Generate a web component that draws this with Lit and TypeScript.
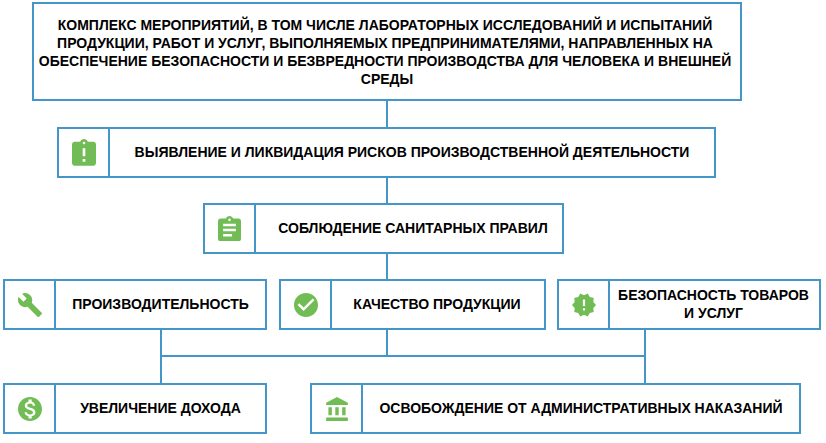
import { LitElement, html, css, svg } from "lit";
import { customElement } from "lit/decorators.js";

const P = {
  late: "M19 3h-4.18C14.4 1.84 13.3 1 12 1c-1.3 0-2.4.84-2.82 2H5c-1.1 0-2 .9-2 2v14c0 1.1.9 2 2 2h14c1.1 0 2-.9 2-2V5c0-1.1-.9-2-2-2zm-6 15h-2v-2h2v2zm0-4h-2V8h2v6zm-1-9c-.55 0-1-.45-1-1s.45-1 1-1 1 .45 1 1-.45 1-1 1z",
  assign: "M19 3h-4.18C14.4 1.84 13.3 1 12 1c-1.3 0-2.4.84-2.82 2H5c-1.1 0-2 .9-2 2v14c0 1.1.9 2 2 2h14c1.1 0 2-.9 2-2V5c0-1.1-.9-2-2-2zm-7 0c.55 0 1 .45 1 1s-.45 1-1 1-1-.45-1-1 .45-1 1-1zm2 14H7v-2h7v2zm3-4H7v-2h10v2zm0-4H7V7h10v2z",
  build: "M22.7 19l-9.1-9.1c.9-2.3.4-5-1.5-6.9-2-2-5-2.4-7.4-1.3L9 6 6 9 1.6 4.7C.4 7.1.9 10.1 2.9 12.1c1.9 1.9 4.6 2.4 6.9 1.5l9.1 9.1c.4.4 1 .4 1.4 0l2.3-2.3c.5-.4.5-1.1.1-1.4z",
  check: "M12 2C6.48 2 2 6.48 2 12s4.48 10 10 10 10-4.48 10-10S17.52 2 12 2zm-2 15l-5-5 1.41-1.41L10 14.17l7.59-7.59L19 8l-9 9z",
  fresh: "M23 12l-2.44-2.78.34-3.68-3.61-.82-1.89-3.18L12 3 8.6 1.54 6.71 4.72l-3.61.81.34 3.68L1 12l2.44 2.78-.34 3.69 3.61.82 1.89 3.18L12 21l3.4 1.46 1.89-3.18 3.61-.82-.34-3.68L23 12zm-10 5h-2v-2h2v2zm0-4h-2V7h2v6z",
  money: "M12 2C6.48 2 2 6.48 2 12s4.48 10 10 10 10-4.48 10-10S17.52 2 12 2zm1.41 16.09V20h-2.67v-1.93c-1.71-.36-3.16-1.46-3.27-3.4h1.96c.1 1.05.82 1.87 2.65 1.87 1.96 0 2.4-.98 2.4-1.59 0-.83-.44-1.61-2.67-2.14-2.48-.6-4.18-1.62-4.18-3.67 0-1.72 1.39-2.84 3.11-3.21V4h2.67v1.95c1.86.45 2.79 1.86 2.85 3.39H14.3c-.05-1.11-.64-1.87-2.22-1.87-1.5 0-2.4.68-2.4 1.64 0 .84.65 1.39 2.67 1.91s4.18 1.39 4.18 3.91c-.01 1.83-1.38 2.83-3.12 3.16z",
  bank: "M4 10v7h3v-7H4zm6 0v7h3v-7h-3zM2 22h19v-3H2v3zm14-12v7h3v-7h-3zm-4.5-9L2 6v2h19V6l-9.5-5z",
};

@customElement("app-root")
export class AppRoot extends LitElement {
  static styles = css`
    :host {
      display: block;
      width: 826px;
      height: 443px;
      background: #fff;
      font-family: "Liberation Sans", Arial, sans-serif;
      font-weight: 700;
      font-size: 14px;
      color: #000;
      padding-top: 2px;
      box-sizing: border-box;
    }
    .box {
      display: flex;
      box-sizing: border-box;
      border: 2px solid #4596c8;
      height: 51px;
      background: #fff;
    }
    .ico {
      flex: 0 0 49px;
      border-right: 2px solid #4596c8;
      display: flex;
      align-items: center;
      justify-content: center;
    }
    .ico svg { fill: #72bc55; display: block; }
    .txt {
      flex: 1;
      display: flex;
      align-items: center;
      justify-content: center;
      text-align: center;
      line-height: 18px;
      padding-bottom: 1px;
    }
    .top {
      margin-left: 32px;
      width: 710px;
      height: 99px;
      padding: 0 4px;
    }
    .top .txt { padding-bottom: 0; }
    .lines { width: 100%; }
    .shift { padding-right: 4px; }
    .r1 { margin-left: 57px; width: 659px; }
    .r2 { margin-left: 203px; width: 361px; }
    .r2 .txt { padding-left: 8px; }
    .row { display: flex; align-items: flex-start; }
    .w264 { width: 264px; }
    .r3a { margin-left: 3px; }
    .r3b { margin-left: 12px; width: 267px; }
    .r3b .txt { padding-right: 2px; }
    .r3c { margin-left: 11px; }
    .r3c .txt { padding-right: 2px; }
    .r4b { margin-left: 43px; width: 491px; }
    .stem {
      width: 2px;
      margin-left: 386px;
      background: #4596c8;
      height: 26px;
    }
    .stem.s25 { height: 25px; }
    .bus {
      position: relative;
      box-sizing: border-box;
      margin-left: 160px;
      width: 486px;
      height: 53px;
      border-left: 2px solid #4596c8;
      border-right: 2px solid #4596c8;
    }
    .bus::after {
      content: "";
      position: absolute;
      left: 0;
      right: 0;
      top: 25px;
      height: 2px;
      background: #4596c8;
    }
    .bus::before {
      content: "";
      position: absolute;
      left: 224px;
      top: 0;
      width: 2px;
      height: 25px;
      background: #4596c8;
    }
  `;

  icon(d: string, vb: string, w: number, h: number) {
    return html`<svg viewBox=${vb} width=${w} height=${h}>${svg`<path d=${d}></path>`}</svg>`;
  }

  box(cls: string, label: unknown, ic: unknown) {
    return html`<div class="box ${cls}">
      <div class="ico">${ic}</div>
      <div class="txt">${label}</div>
    </div>`;
  }

  render() {
    return html`
      <div class="box top">
        <div class="txt">
          <div class="lines">
            <div class="shift">КОМПЛЕКС МЕРОПРИЯТИЙ, В ТОМ ЧИСЛЕ ЛАБОРАТОРНЫХ ИССЛЕДОВАНИЙ И ИСПЫТАНИЙ<br />ПРОДУКЦИИ, РАБОТ И УСЛУГ, ВЫПОЛНЯЕМЫХ ПРЕДПРИНИМАТЕЛЯМИ, НАПРАВЛЕННЫХ НА<br />ОБЕСПЕЧЕНИЕ БЕЗОПАСНОСТИ И БЕЗВРЕДНОСТИ ПРОИЗВОДСТВА ДЛЯ ЧЕЛОВЕКА И ВНЕШНЕЙ</div>
            <div>СРЕДЫ</div>
          </div>
        </div>
      </div>
      <div class="stem"></div>
      ${this.box("r1", "ВЫЯВЛЕНИЕ И ЛИКВИДАЦИЯ РИСКОВ ПРОИЗВОДСТВЕННОЙ ДЕЯТЕЛЬНОСТИ", this.icon(P.late, "3 1 18 20", 24, 26.67))}
      <div class="stem s25"></div>
      ${this.box("r2", "СОБЛЮДЕНИЕ САНИТАРНЫХ ПРАВИЛ", this.icon(P.assign, "3 1 18 20", 23, 25.6))}
      <div class="stem s25"></div>
      <div class="row">
        ${this.box("w264 r3a", "ПРОИЗВОДИТЕЛЬНОСТЬ", this.icon(P.build, "1 1 22 22", 24, 24))}
        ${this.box("r3b", "КАЧЕСТВО ПРОДУКЦИИ", this.icon(P.check, "2 2 20 20", 24, 24))}
        ${this.box("w264 r3c", html`БЕЗОПАСНОСТЬ ТОВАРОВ<br />И УСЛУГ`, this.icon(P.fresh, "1 1 22 22", 24, 24))}
      </div>
      <div class="bus"></div>
      <div class="row">
        ${this.box("w264 r3a", "УВЕЛИЧЕНИЕ ДОХОДА", this.icon(P.money, "2 2 20 20", 24, 24))}
        ${this.box("r4b", "ОСВОБОЖДЕНИЕ ОТ АДМИНИСТРАТИВНЫХ НАКАЗАНИЙ", this.icon(P.bank, "2 1 19 21", 22, 24))}
      </div>
    `;
  }
}
